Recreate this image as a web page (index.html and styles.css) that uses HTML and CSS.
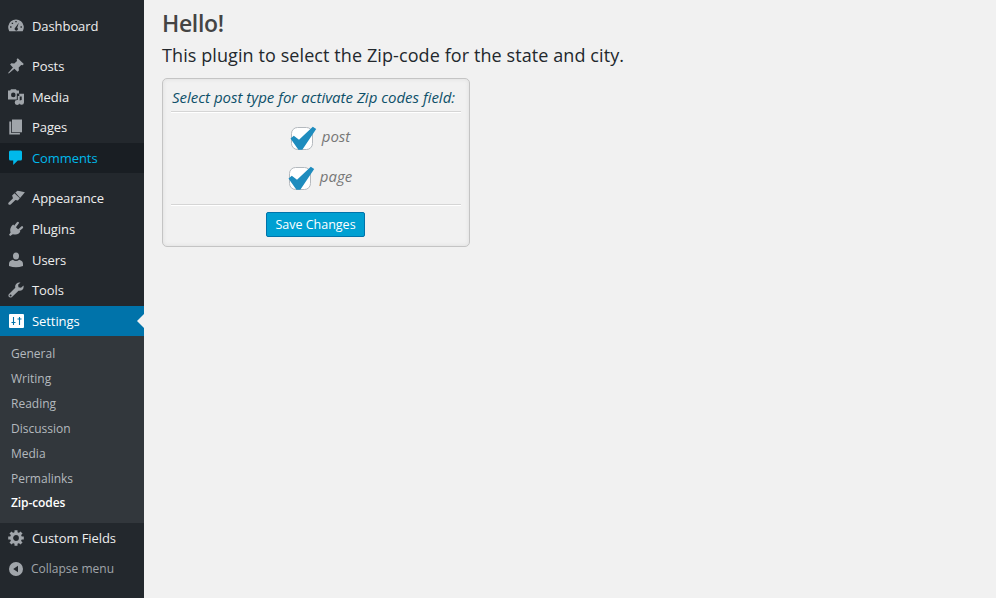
FILE: index.html
```
<!DOCTYPE html>
<html lang="en">
<head>
<meta charset="utf-8">
<title>Zip-codes</title>
<link rel="stylesheet" href="styles.css">
</head>
<body>
<nav class="sidebar">
  <ul class="menu">
    <li class="item gap"><svg class="icon" viewBox="0 0 16 16"><path fill-rule="evenodd" d="M1.3 13.3A7.8 7.8 0 1 1 14.7 13.3ZM7.3 2.9h1.4v1.4H7.3ZM3.7 4.7h1.4v1.4H3.7ZM2.1 8.3h1.4v1.4H2.1ZM12.5 8.3h1.4v1.4h-1.4ZM10.8 4.8 9.2 9.7A1.6 1.6 0 1 1 7 10Z"/></svg><span>Dashboard</span></li>
    <li class="item"><svg class="icon" viewBox="0 0 16 16"><path d="M9.8.2 15.8 6l-1.2 1.2-1.4-.3-2.5 2.7.2 3-1.4 1.2-3.1-3.1L.8 15.6.1 15l4.8-5.6-2.8-2.8 1.2-1.3 3 .2L9 3 8.7 1.3Z"/></svg><span>Posts</span></li>
    <li class="item"><svg class="icon" viewBox="0 0 16 16"><path fill-rule="evenodd" d="M0 1.5h2.2L3 .2h5l.8 1.3H11v3.1H8.8v6H0ZM5.3 3.6a2.3 2.3 0 1 0 0 4.6 2.3 2.3 0 0 0 0-4.6Z"/><path d="M11.3 4.8H16v8.7a2.4 2.4 0 1 1-2.3-2.5V7.5h-2v5.9A2.5 2.5 0 1 1 9.2 11h.6V7h1.5Z"/></svg><span>Media</span></li>
    <li class="item pages"><svg class="icon" viewBox="0 0 16 16"><path d="M4 .5h10v12.8H4Z"/><path d="M1.3 2.5h1.9v11.6h8.7v1.4H1.3Z"/></svg><span>Pages</span></li>
    <li class="item hover gap"><svg class="icon" viewBox="0 0 16 16"><path d="M2.5.4h10A1.5 1.5 0 0 1 14 1.9v7.2a1.5 1.5 0 0 1-1.5 1.5H9.8L5.2 15v-4.4H2.5A1.5 1.5 0 0 1 1 9.1V1.9A1.5 1.5 0 0 1 2.5.4Z"/></svg><span>Comments</span></li>
    <li class="item"><svg class="icon wide" viewBox="0 0 17 16"><path d="M7.3 2.6 9.5.8l3 .4 4.4 1.1L12.1 8Z"/><path d="m6.5 3.2 5.3 5-1.9 2.2-2.5-.4L3 14.2c-1.6 1.4-3.7 0-2.3-1.8L5 8.2l-.9-2.8Z"/></svg><span>Appearance</span></li>
    <li class="item"><svg class="icon" viewBox="0 0 16 16"><path d="m5.2 3.5 7.1 7.1c-1.3 2.8-3.8 3.6-7.5 2.6l-2.6 1.9L1 13.8l1.6-2.3C1.5 8.2 2.9 5.3 5.2 3.5Z"/><path class="prong" d="m7.2 5.2 2.6-3.3M11 9l3-2.7"/></svg><span>Plugins</span></li>
    <li class="item"><svg class="icon" viewBox="0 0 16 16"><ellipse cx="8" cy="4" rx="3" ry="3.6"/><path d="M4.8 7.8Q8 10.4 11.2 7.8 15 8.9 15 12v2q-7 2.5-14 0v-2Q1 8.9 4.8 7.8Z"/></svg><span>Users</span></li>
    <li class="item"><svg class="icon" viewBox="0 0 16 16"><path fill-rule="evenodd" d="m12.5.5-2.4 2.3.4 2.5 2.5.4 2.5-2.2c.8 3.4-1.8 5.9-5 5.2L4 14.9C1.8 16.6-.8 14 1 12L7.3 5.8C6.4 2.6 9.2-.2 12.5.5ZM2.6 12.4a1 1 0 1 0 0 2 1 1 0 0 0 0-2Z"/></svg><span>Tools</span></li>
    <li class="item current"><svg class="icon" viewBox="0 0 16 16"><rect x="1" y="1" width="15" height="14" rx="1"/><path class="slider" d="M5.5 4v8M3.5 9.5h4M11.5 4v8M9.5 6h4"/></svg><span>Settings</span></li>
  </ul>
  <ul class="submenu">
    <li>General</li>
    <li>Writing</li>
    <li>Reading</li>
    <li>Discussion</li>
    <li>Media</li>
    <li>Permalinks</li>
    <li class="active">Zip-codes</li>
  </ul>
  <ul class="menu tail">
    <li class="item"><svg class="icon" viewBox="0 0 16 16"><circle class="gear" cx="8" cy="8" r="4.4"/><path class="teeth" d="M8 .2v3M8 12.8v3M.2 8h3M12.8 8h3M2.5 2.5l2.1 2.1M11.4 11.4l2.1 2.1M2.5 13.5l2.1-2.1M11.4 4.6l2.1-2.1"/></svg><span>Custom Fields</span></li>
    <li class="item collapse"><svg class="icon" viewBox="0 0 16 16"><path fill-rule="evenodd" d="M8 1a7 7 0 1 0 0 14A7 7 0 0 0 8 1Zm2 3.8v6.4L5.2 8Z"/></svg><span>Collapse menu</span></li>
  </ul>
</nav>
<main class="content">
  <h2>Hello!</h2>
  <p class="intro">This plugin to select the Zip-code for the state and city.</p>
  <form class="panel">
    <h3>Select post type for activate Zip codes field:</h3>
    <div class="choices">
      <label class="choice"><svg class="check" viewBox="0 0 28 26"><rect x="1.5" y="2.5" width="21" height="22" rx="6"/><path d="m.5 13.5 3.3-2.8 5.2 4L22.8 1.8l3.4 2.2L12.3 24.7H8.4Z"/></svg><span>post</span></label>
      <label class="choice"><svg class="check" viewBox="0 0 28 26"><rect x="1.5" y="2.5" width="21" height="22" rx="6"/><path d="m.5 13.5 3.3-2.8 5.2 4L22.8 1.8l3.4 2.2L12.3 24.7H8.4Z"/></svg><span>page</span></label>
    </div>
    <button type="button" class="save">Save Changes</button>
  </form>
</main>
</body>
</html>
```
FILE: styles.css
```
* { box-sizing: border-box; }
body {
  margin: 0;
  height: 598px;
  display: flex;
  overflow: hidden;
  background: #f1f1f1;
  font-family: "Open Sans", sans-serif;
}
ul { list-style: none; margin: 0; padding: 0; }
.sidebar {
  width: 144px;
  flex: none;
  padding-top: 11px;
  background: #23282d;
  color: #eee;
  font-size: 13px;
}
.item {
  display: flex;
  align-items: center;
  height: 30.7px;
  padding-left: 8px;
  gap: 8px;
  line-height: 18px;
  letter-spacing: -0.08px;
  white-space: nowrap;
}
.item.gap { margin-bottom: 9.3px; }
.pages { padding-bottom: 1px; }
.icon { width: 16px; height: 16px; flex: none; fill: #a0a5aa; }
.icon.wide { width: 17px; margin-right: -1px; }
.hover { height: 30px; background: #191e23; color: #00b9eb; }
.hover.gap { margin-bottom: 10px; }
.hover .icon { fill: #00b9eb; }
.current { height: 30px; background: #0073aa; color: #fff; }
.current .icon { fill: #fff; }
.current::after {
  content: "";
  margin-left: auto;
  border: 7px solid transparent;
  border-left: 0;
  border-right-color: #f1f1f1;
}
.prong { fill: none; stroke: #a0a5aa; stroke-width: 2.3; stroke-linecap: round; }
.slider { fill: none; stroke: #0073aa; stroke-width: 1.1; }
.gear { fill: none; stroke: #a0a5aa; stroke-width: 3; }
.teeth { stroke: #a0a5aa; stroke-width: 3; }
.submenu {
  height: 187px;
  padding: 6.2px 0 0 11px;
  background: #32373c;
  color: #b4b9be;
  font-size: 12px;
  line-height: 24.9px;
}
.active { color: #fff; font-weight: 600; letter-spacing: -0.1px; }
.collapse { height: 31.5px; color: #a0a5aa; font-size: 12px; letter-spacing: 0; }
.collapse span { margin-left: -1px; }
.content { padding: 8px 0 0 18px; }
h2 {
  margin: 0;
  color: #444;
  font-size: 23px;
  font-weight: 600;
  letter-spacing: -0.35px;
  line-height: 31px;
}
.intro {
  margin: 3px 0 9px;
  color: #23282d;
  font-size: 18px;
  letter-spacing: 0.09px;
  line-height: 27px;
  white-space: nowrap;
}
.panel {
  width: 308px;
  height: 169px;
  padding: 8px;
  border: 1px solid #c4c4c4;
  border-radius: 5px;
  box-shadow: inset 0 0 4px #ddd;
  text-align: center;
}
h3 {
  margin: 0;
  height: 25px;
  padding-left: 1px;
  border-bottom: 1px solid #d5d5d5;
  box-shadow: 0 1px #fff;
  color: #0d5069;
  font-size: 15px;
  font-style: italic;
  font-weight: 400;
  line-height: 21px;
  text-align: left;
  white-space: nowrap;
}
.choices {
  height: 93px;
  padding: 6px 0 0 8px;
  border-bottom: 1px solid #d5d5d5;
  box-shadow: 0 1px #fff;
}
.choice {
  display: flex;
  justify-content: center;
  align-items: center;
  height: 40px;
  gap: 4px;
  color: #777;
  font-size: 15px;
  font-style: italic;
}
.choice span { padding-bottom: 5px; }
.check { width: 28px; height: 26px; }
.check rect { fill: #fff; stroke: #b4b9be; }
.check path { fill: #1e8cbe; }
.save {
  display: block;
  width: 99px;
  height: 25px;
  margin: 7px 0 0 95px;
  padding: 0 0 1px;
  border: 1px solid #0073aa;
  border-radius: 2px;
  background: #00a0d2;
  color: #fff;
  font: 12.5px "Open Sans", sans-serif;
}
```
